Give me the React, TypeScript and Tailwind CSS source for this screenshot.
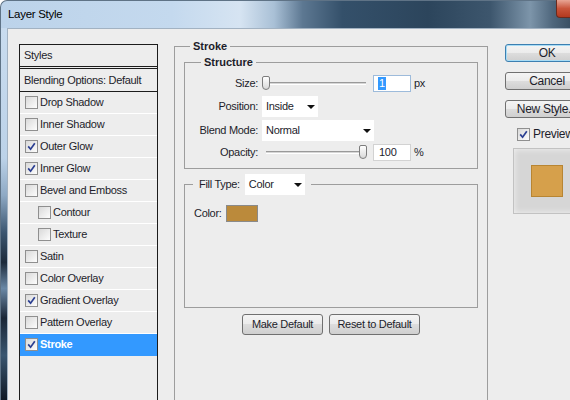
import React from "react";

const txt = "text-[11px] tracking-[-0.3px] text-[#1d1d2b]";

function Check({ checked }: { checked?: boolean }) {
  return (
    <span className="w-[13px] h-[13px] shrink-0 border border-[#8f8f8f] bg-[linear-gradient(135deg,#d9d9d9,#fdfdfd)] flex items-center justify-center">
      {checked && (
        <svg width="9" height="9" viewBox="0 0 9 9">
          <path d="M1.2 4.4 L3.6 7.2 L7.8 1.2" fill="none" stroke="#2b3f92" strokeWidth="1.7" />
        </svg>
      )}
    </span>
  );
}

function Arrow() {
  return (
    <svg width="8" height="4" viewBox="0 0 8 4">
      <path d="M0 0H8L4 4Z" fill="#111" />
    </svg>
  );
}

function Drop({ cls, label }: { cls: string; label: string }) {
  return (
    <div className={`h-[21px] bg-white flex items-center justify-between pl-[4px] pr-[3px] ${cls}`}>
      <span className={txt}>{label}</span>
      <Arrow />
    </div>
  );
}

function Slider({ right }: { right?: boolean }) {
  return (
    <div className="relative w-[108px] h-[17px] flex items-center">
      <div className="mx-[4px] flex-1 h-[3px] border-t border-t-[#9a9a9a] border-b border-b-white bg-[#d6d6d6]" />
      <div
        className={`absolute top-[1px] w-[8px] h-[14px] rounded-t-[2px] rounded-b-[4px] border border-[#7d7d7d] bg-[linear-gradient(180deg,#ffffff,#d9d9d9)] ${
          right ? "left-[97px]" : "left-0"
        }`}
      />
    </div>
  );
}

function Btn({ children, cls, def }: { children: React.ReactNode; cls?: string; def?: boolean }) {
  return (
    <div
      className={`shrink-0 flex items-center justify-center rounded-[3px] border bg-[linear-gradient(180deg,#f4f4f4_0%,#ebebeb_50%,#dddddd_50%,#cfcfcf_100%)] ${
        def ? "border-[#3c7fb1] shadow-[inset_0_0_0_1px_#a8dcf5]" : "border-[#707070]"
      } ${cls ?? ""}`}
    >
      {children}
    </div>
  );
}

const items: { label: string; checked?: boolean; indent?: boolean; selected?: boolean }[] = [
  { label: "Drop Shadow" },
  { label: "Inner Shadow" },
  { label: "Outer Glow", checked: true },
  { label: "Inner Glow", checked: true },
  { label: "Bevel and Emboss" },
  { label: "Contour", indent: true },
  { label: "Texture", indent: true },
  { label: "Satin" },
  { label: "Color Overlay" },
  { label: "Gradient Overlay", checked: true },
  { label: "Pattern Overlay" },
  { label: "Stroke", checked: true, selected: true },
];

function List() {
  return (
    <div className="shrink-0 ml-[11px] mt-[15px] w-[139px] h-[400px] border border-[#1c1c1c] flex flex-col">
      <div className={`h-[24px] border-b-[3px] border-double border-[#1c1c1c] flex items-center pl-[4px] ${txt}`}>
        Styles
      </div>
      <div className={`h-[23px] border-b border-[#1c1c1c] flex items-center pl-[4px] ${txt}`}>
        Blending Options: Default
      </div>
      {items.map((it) => (
        <div
          key={it.label}
          className={`h-[22px] border-b flex items-center gap-[2px] ${it.indent ? "pl-[18px]" : "pl-[5px]"} ${
            it.selected ? "bg-[#3399ff] border-[#3399ff]" : "border-white"
          }`}
        >
          <Check checked={it.checked} />
          <span
            className={
              it.selected
                ? "text-[11px] tracking-[-0.3px] text-white font-bold"
                : txt
            }
          >
            {it.label}
          </span>
        </div>
      ))}
    </div>
  );
}

function Middle() {
  const lab = `w-[73px] text-right shrink-0 ${txt}`;
  return (
    <fieldset className="shrink-0 ml-[16px] mt-[11px] w-[314px] h-[420px] border border-[#9d9d9d]">
      <legend className="ml-[15px] px-[3px] font-bold text-[11px] leading-[13px] text-[#1d1d2b]">Stroke</legend>
      <div className="px-[9px]">
        <fieldset className="mt-[3px] border border-[#9d9d9d]">
          <legend className="ml-[16px] px-[3px] font-bold text-[11px] leading-[13px] text-[#1d1d2b]">
            Structure
          </legend>
          <div className="pt-[6px] pb-[7px] flex flex-col">
            <div className="h-[17px] flex items-center">
              <span className={lab}>Size:</span>
              <div className="ml-[4px]">
                <Slider />
              </div>
              <div className="ml-[3px] w-[38px] h-[17px] bg-white border border-[#9dbbdb] flex items-center pl-[4px]">
                <span className="bg-[#3399ff] text-white text-[11px] leading-[13px] px-[1px]">1</span>
              </div>
              <span className={`ml-[3px] ${txt}`}>px</span>
            </div>
            <div className="mt-[4px] h-[21px] flex items-center">
              <span className={lab}>Position:</span>
              <Drop cls="ml-[4px] w-[56px]" label="Inside" />
            </div>
            <div className="mt-[3px] h-[21px] flex items-center">
              <span className={lab}>Blend Mode:</span>
              <Drop cls="ml-[4px] w-[112px]" label="Normal" />
            </div>
            <div className="mt-[3px] h-[17px] flex items-center">
              <span className={lab}>Opacity:</span>
              <div className="ml-[4px]">
                <Slider right />
              </div>
              <div className="ml-[3px] w-[38px] h-[17px] bg-white border border-[#d2d2d2] flex items-center pl-[5px]">
                <span className={txt}>100</span>
              </div>
              <span className={`ml-[3px] ${txt}`}>%</span>
            </div>
          </div>
        </fieldset>
        <fieldset className="mt-[5px] h-[134px] border border-[#9d9d9d]">
          <legend className="ml-[8px] px-[6px]">
            <div className="flex items-center">
              <span className={txt}>Fill Type:</span>
              <Drop cls="ml-[5px] w-[60px]" label="Color" />
            </div>
          </legend>
          <div className="mt-[10px] pl-[9px] h-[17px] flex items-center gap-[4px]">
            <span className={txt}>Color:</span>
            <div className="w-[32px] h-[17px] border border-[#8a8a8a] bg-[#bb8a3b]" />
          </div>
        </fieldset>
        <div className="mt-[6px] flex justify-center gap-[6px]">
          <Btn cls={`w-[81px] h-[21px] ${txt}`}>Make Default</Btn>
          <Btn cls={`w-[91px] h-[21px] ${txt}`}>Reset to Default</Btn>
        </div>
      </div>
    </fieldset>
  );
}

function Right() {
  const bt = "w-[84px] h-[18px] text-[12px] tracking-[-0.3px] text-[#1d1d2b]";
  return (
    <div className="shrink-0 ml-[17px] mt-[15px] w-[84px] flex flex-col">
      <Btn def cls={bt}>OK</Btn>
      <Btn cls={`mt-[10px] ${bt}`}>Cancel</Btn>
      <Btn cls={`mt-[10px] ${bt}`}>New Style...</Btn>
      <div className="mt-[9px] pl-[12px] h-[14px] flex items-center gap-[3px]">
        <Check checked />
        <span className="text-[12px] tracking-[-0.3px] text-[#1d1d2b]">Preview</span>
      </div>
      <div className="mt-[7px] ml-[8px] w-[67px] h-[66px] border border-[#c2c2c2] bg-[#d6d6d6] shadow-[inset_0_0_6px_rgba(255,255,255,0.7)] flex items-center justify-center">
        <div className="w-[32px] h-[32px] border border-[#b88532] bg-[#d6a04b]" />
      </div>
    </div>
  );
}

export default function App() {
  return (
    <div className="w-[570px] h-[400px] overflow-hidden flex flex-col bg-white font-['Liberation_Sans',Arial,sans-serif]">
      <div className="relative h-[28px] shrink-0 rounded-tl-[7px] border-t border-l border-[#5f7386] bg-[linear-gradient(90deg,#bcd3ea_0%,#c4d9ee_30%,#d6e4f2_42%,#a9c0d6_48%,#5d7892_53%,#34506a_60%,#2c455c_75%,#3d566d_86%,#7d95aa_93%,#4e667c_97%,#3a5064_100%)] flex items-center pl-[7px]">
        <span className="text-[11.5px] tracking-[-0.3px] text-black pt-[1px]">Layer Style</span>
        <div className="absolute right-0 top-[-1px] w-[14px] h-[18px] rounded-bl-[4px] border-l border-b border-[#6b2a1d] bg-[linear-gradient(180deg,#e8a595,#c9553b_50%,#b3391f)]" />
      </div>
      <div className="flex flex-1 min-h-0">
        <div className="w-[7px] shrink-0 border-l border-[#5f7386] bg-[linear-gradient(180deg,#c9dcef_0%,#bcd2e8_35%,#8ea9c4_45%,#3c5670_55%,#1c2a3a_63%,#6a88a6_70%,#1a2636_78%,#3a5670_88%,#0f1824_100%)]" />
        <div className="flex-1 min-w-0 flex items-start bg-[#ededed] border-l border-t border-[#a2b2c2] overflow-hidden">
          <List />
          <Middle />
          <Right />
        </div>
      </div>
    </div>
  );
}
